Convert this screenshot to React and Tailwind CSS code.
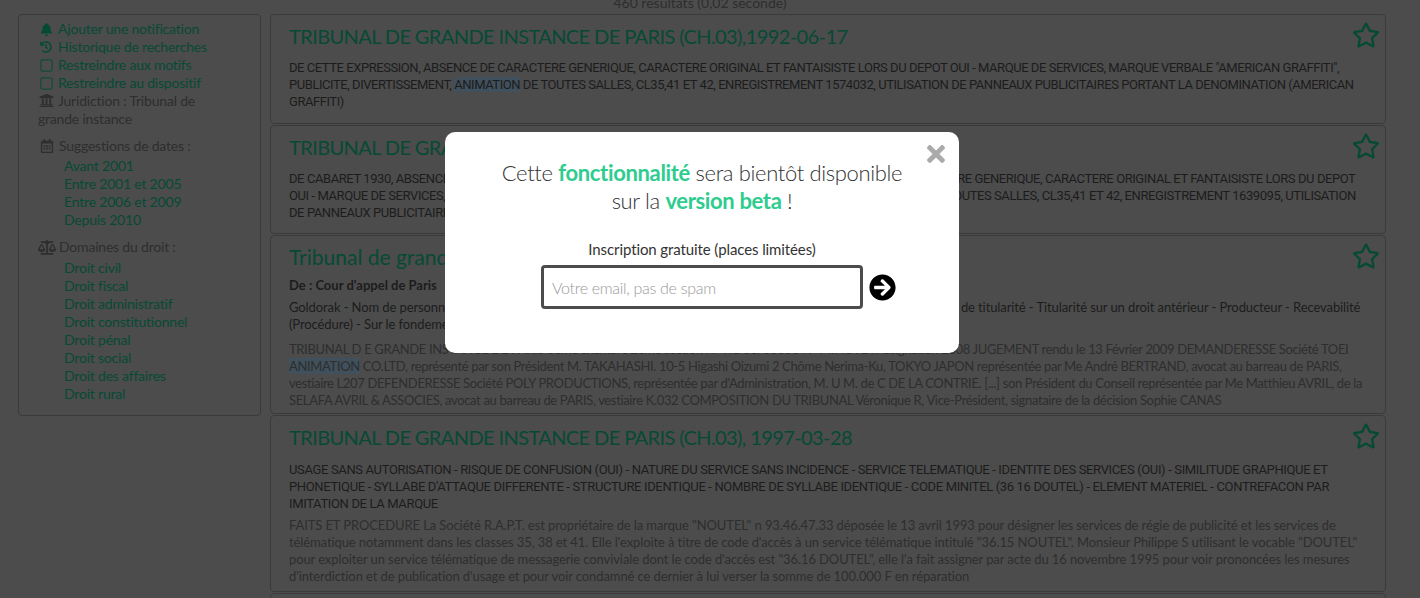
import React from 'react';
import { FaBell, FaHistory, FaUniversity, FaRegCalendarAlt, FaBalanceScale, FaRegStar, FaTimes, FaArrowCircleRight } from 'react-icons/fa';
import { Square } from 'lucide-react';

const dates = ['Avant 2001', 'Entre 2001 et 2005', 'Entre 2006 et 2009', 'Depuis 2010'];
const domains = ['Droit civil', 'Droit fiscal', 'Droit administratif', 'Droit constitutionnel', 'Droit pénal', 'Droit social', 'Droit des affaires', 'Droit rural'];

const Hl = ({ children }) => <span className="bg-[#40505c]">{children}</span>;

const Result = ({ title, heightClass, titleClass = 'text-[20px] tracking-[-0.6px]', children }) => (
  <div className={`relative border border-[#3a3a3a] rounded-[4px] px-[18px] pt-[8px] ${heightClass}`}>
    <h3 className={`leading-[26px] text-[#064a35] ${titleClass}`}>{title}</h3>
    <FaRegStar className="absolute top-[6px] right-[5px] w-[28px] h-[28px] text-[#064a35]" />
    {children}
  </div>
);

const Link = ({ children }) => <div className="text-[#064a35] leading-[18px]">{children}</div>;

export default function App() {
  return (
    <div className="relative h-[598px] overflow-hidden bg-[#4c4c4c] font-['Lato','Noto_Sans',sans-serif] text-[13px] text-[#1c1c1c]">
      <div className="text-center text-[14px] text-[#2e2e2e] leading-[18px] mt-[-6px] pr-[20px]">460 résultats (0,02 seconde)</div>
      <div className="flex items-start gap-[9px] pl-[18px] mt-[2px]">
        <aside className="w-[243px] shrink-0 border border-[#3a3a3a] rounded-[4px] pl-[19px] pr-[40px] pt-[5px] pb-[12px] text-[14px] tracking-[-0.2px] text-[#2e2e2e]">
          <div className="flex items-center text-[#064a35] leading-[18px]"><FaBell className="w-[13px] h-[13px] ml-[2px] mr-[5px]" />Ajouter une notification</div>
          <div className="flex items-center text-[#064a35] leading-[18px]"><FaHistory className="w-[12px] h-[12px] ml-[2px] mr-[6px]" />Historique de recherches</div>
          <div className="flex items-center text-[#064a35] leading-[18px]"><Square strokeWidth={1.6} className="w-[15px] h-[15px] ml-[1px] mr-[4px]" />Restreindre aux motifs</div>
          <div className="flex items-center text-[#064a35] leading-[18px]"><Square strokeWidth={1.6} className="w-[15px] h-[15px] ml-[1px] mr-[4px]" />Restreindre au dispositif</div>
          <div className="leading-[18px]"><FaUniversity className="inline w-[17px] h-[15px] mr-[3px] align-[-2px]" />Juridiction : Tribunal de grande instance</div>
          <div className="flex items-center leading-[18px] mt-[9px]"><FaRegCalendarAlt className="w-[14px] h-[14px] ml-[2px] mr-[5px]" />Suggestions de dates :</div>
          <div className="pl-[26px] mt-[2px]">{dates.map((d) => <Link key={d}>{d}</Link>)}</div>
          <div className="flex items-center leading-[18px] mt-[9px]"><FaBalanceScale className="w-[18px] h-[15px] mr-[3px]" />Domaines du droit :</div>
          <div className="pl-[26px] mt-[3px]">{domains.map((d) => <Link key={d}>{d}</Link>)}</div>
        </aside>
        <main className="w-[1116px] shrink-0 flex flex-col gap-px leading-[17px]">
          <Result title="TRIBUNAL DE GRANDE INSTANCE DE PARIS (CH.03),1992-06-17" heightClass="h-[110px]">
            <p className="mt-[10px] font-['Roboto'] tracking-[-0.45px]">DE CETTE EXPRESSION, ABSENCE DE CARACTERE GENERIQUE, CARACTERE ORIGINAL ET FANTAISISTE LORS DU DEPOT OUI - MARQUE DE SERVICES, MARQUE VERBALE "AMERICAN GRAFFITI", PUBLICITE, DIVERTISSEMENT, <Hl>ANIMATION</Hl> DE TOUTES SALLES, CL35,41 ET 42, ENREGISTREMENT 1574032, UTILISATION DE PANNEAUX PUBLICITAIRES PORTANT LA DENOMINATION (AMERICAN GRAFFITI)</p>
          </Result>
          <Result title="TRIBUNAL DE GRANDE INSTANCE DE PARIS (CH.03),1992-06-17" heightClass="h-[109px]">
            <p className="mt-[10px] font-['Roboto'] tracking-[-0.42px]">DE CABARET 1930, ABSENCE DE CARACTERE DESCRIPTIF, ABSENCE DE CARACTERE ARBITRAIRE, ABSENCE DE CARACTERE GENERIQUE, CARACTERE ORIGINAL ET FANTAISISTE LORS DU DEPOT OUI - MARQUE DE SERVICES, MARQUE VERBALE "CABARET", PUBLICITE, SPECTACLE, DIVERTISSEMENT, <Hl>ANIMATION</Hl> DE TOUTES SALLES, CL35,41 ET 42, ENREGISTREMENT 1639095, UTILISATION DE PANNEAUX PUBLICITAIRES PORTANT LA DENOMINATION</p>
          </Result>
          <Result title="Tribunal de grande instance de Paris, 2009-02-13" heightClass="h-[179px]" titleClass="text-[21px]">
            <p className="font-bold mt-[7px]">De : Cour d'appel de Paris</p>
            <p className="mt-[5px] tracking-[-0.1px]">Goldorak - Nom de personnage - Œuvres audiovisuelles - Dessins animés - Contrefaçon de droit d'auteur - Présomption de titularité - Titularité sur un droit antérieur - Producteur - Recevabilité (Procédure) - Sur le fondement du droit d'auteur - Action en contrefaçon - Qualité à agir - Irrecevabilité de la Procédure</p>
            <p className="mt-[8px] tracking-[-0.35px] text-[#2e2e2e]">TRIBUNAL D E GRANDE INSTANCE DE PARIS 3ème chambre 2ème section N° RG 08/00000 N° MINUTE : Assignation 2008 JUGEMENT rendu le 13 Février 2009 DEMANDERESSE Société TOEI <Hl>ANIMATION</Hl> CO.LTD, représenté par son Président M. TAKAHASHI. 10-5 Higashi Oizumi 2 Chôme Nerima-Ku, TOKYO JAPON représentée par Me André BERTRAND, avocat au barreau de PARIS, vestiaire L207 DEFENDERESSE Société POLY PRODUCTIONS, représentée par d'Administration, M. U M. de C DE LA CONTRIE. [...] son Président du Conseil représentée par Me Matthieu AVRIL, de la SELAFA AVRIL &amp; ASSOCIES, avocat au barreau de PARIS, vestiaire K.032 COMPOSITION DU TRIBUNAL Véronique R, Vice-Président, signataire de la décision Sophie CANAS</p>
          </Result>
          <Result title="TRIBUNAL DE GRANDE INSTANCE DE PARIS (CH.03), 1997-03-28" heightClass="h-[177px]">
            <p className="mt-[11px] font-['Roboto'] tracking-[-0.35px]">USAGE SANS AUTORISATION - RISQUE DE CONFUSION (OUI) - NATURE DU SERVICE SANS INCIDENCE - SERVICE TELEMATIQUE - IDENTITE DES SERVICES (OUI) - SIMILITUDE GRAPHIQUE ET PHONETIQUE - SYLLABE D'ATTAQUE DIFFERENTE - STRUCTURE IDENTIQUE - NOMBRE DE SYLLABE IDENTIQUE - CODE MINITEL (36 16 DOUTEL) - ELEMENT MATERIEL - CONTREFACON PAR IMITATION DE LA MARQUE</p>
            <p className="mt-[5px] tracking-[-0.1px] text-[#2e2e2e]">FAITS ET PROCEDURE La Société R.A.P.T. est propriétaire de la marque "NOUTEL" n 93.46.47.33 déposée le 13 avril 1993 pour désigner les services de régie de publicité et les services de télématique notamment dans les classes 35, 38 et 41. Elle l'exploite à titre de code d'accès à un service télématique intitulé "36.15 NOUTEL". Monsieur Philippe S utilisant le vocable "DOUTEL" pour exploiter un service télématique de messagerie conviviale dont le code d'accès est "36.16 DOUTEL", elle l'a fait assigner par acte du 16 novembre 1995 pour voir prononcées les mesures d'interdiction et de publication d'usage et pour voir condamné ce dernier à lui verser la somme de 100.000 F en réparation</p>
          </Result>
          <div className="h-10 border border-[#3a3a3a] rounded-[4px]" />
        </main>
      </div>

      <div className="absolute left-[445px] top-[132px] w-[514px] h-[221px] bg-white rounded-[10px] text-center text-[#333333]">
        <FaTimes className="absolute top-[9px] right-[10px] w-[26px] h-[26px] text-[#aaaaaa]" />
        <p className="pt-[27px] text-[22px] leading-[28px] tracking-[-0.35px] font-light">Cette <b className="font-bold text-[#2ecc8f]">fonctionnalité</b> sera bientôt disponible<br />sur la <b className="font-bold text-[#2ecc8f]">version beta</b> !</p>
        <p className="mt-[25px] text-[15px] leading-[18px] tracking-[-0.1px]">Inscription gratuite (places limitées)</p>
        <div className="flex items-center mt-[7px] pl-[96px]">
          <input readOnly placeholder="Votre email, pas de spam" className="w-[322px] h-[44px] border-[3px] border-[#4c4c4c] rounded-[4px] px-2 text-[16px] tracking-[-0.3px] font-light placeholder:text-[#999999] outline-none" />
          <FaArrowCircleRight className="ml-[6px] w-[27px] h-[27px] text-black" />
        </div>
      </div>
    </div>
  );
}
